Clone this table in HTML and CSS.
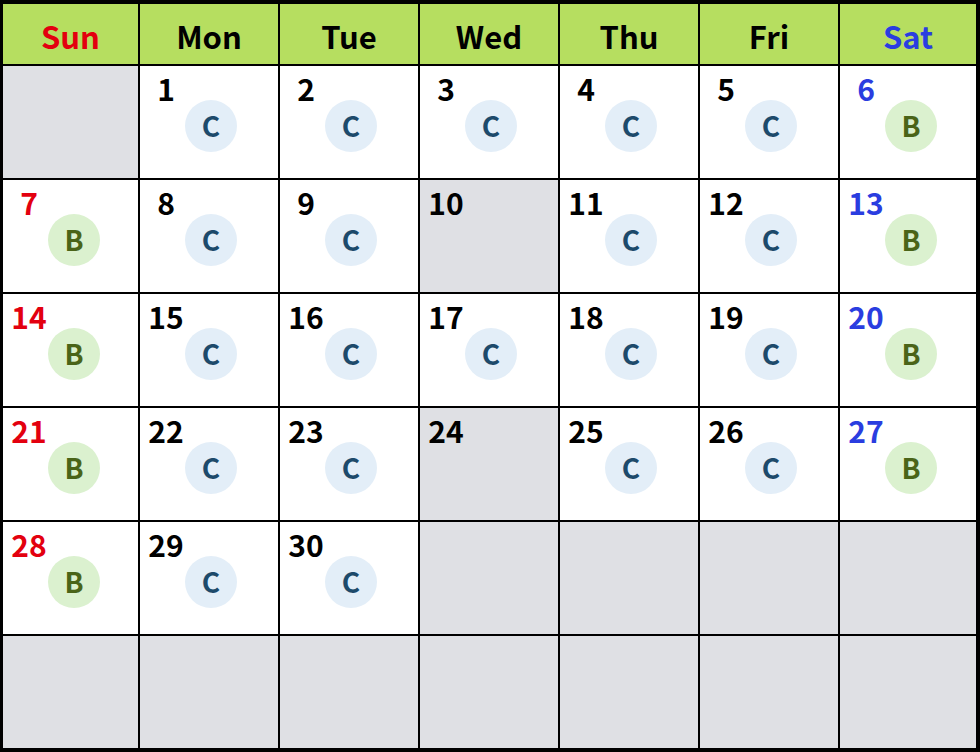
FILE: index.html
```html
<!DOCTYPE html>
<html lang="ja">
<head>
<meta charset="utf-8">
<title>Calendar</title>
<link rel="stylesheet" href="styles.css">
</head>
<body>
<div class="cal">
  <div class="hd sun">Sun</div>
  <div class="hd">Mon</div>
  <div class="hd">Tue</div>
  <div class="hd">Wed</div>
  <div class="hd">Thu</div>
  <div class="hd">Fri</div>
  <div class="hd sat">Sat</div>

  <div class="day off"></div>
  <div class="day"><div class="num">1</div><div class="bd c">C</div></div>
  <div class="day"><div class="num">2</div><div class="bd c">C</div></div>
  <div class="day"><div class="num">3</div><div class="bd c">C</div></div>
  <div class="day"><div class="num">4</div><div class="bd c">C</div></div>
  <div class="day"><div class="num">5</div><div class="bd c">C</div></div>
  <div class="day"><div class="num sat">6</div><div class="bd b">B</div></div>

  <div class="day"><div class="num sun">7</div><div class="bd b">B</div></div>
  <div class="day"><div class="num">8</div><div class="bd c">C</div></div>
  <div class="day"><div class="num">9</div><div class="bd c">C</div></div>
  <div class="day off"><div class="num">10</div></div>
  <div class="day"><div class="num">11</div><div class="bd c">C</div></div>
  <div class="day"><div class="num">12</div><div class="bd c">C</div></div>
  <div class="day"><div class="num sat">13</div><div class="bd b">B</div></div>

  <div class="day"><div class="num sun">14</div><div class="bd b">B</div></div>
  <div class="day"><div class="num">15</div><div class="bd c">C</div></div>
  <div class="day"><div class="num">16</div><div class="bd c">C</div></div>
  <div class="day"><div class="num">17</div><div class="bd c">C</div></div>
  <div class="day"><div class="num">18</div><div class="bd c">C</div></div>
  <div class="day"><div class="num">19</div><div class="bd c">C</div></div>
  <div class="day"><div class="num sat">20</div><div class="bd b">B</div></div>

  <div class="day"><div class="num sun">21</div><div class="bd b">B</div></div>
  <div class="day"><div class="num">22</div><div class="bd c">C</div></div>
  <div class="day"><div class="num">23</div><div class="bd c">C</div></div>
  <div class="day off"><div class="num">24</div></div>
  <div class="day"><div class="num">25</div><div class="bd c">C</div></div>
  <div class="day"><div class="num">26</div><div class="bd c">C</div></div>
  <div class="day"><div class="num sat">27</div><div class="bd b">B</div></div>

  <div class="day"><div class="num sun">28</div><div class="bd b">B</div></div>
  <div class="day"><div class="num">29</div><div class="bd c">C</div></div>
  <div class="day"><div class="num">30</div><div class="bd c">C</div></div>
  <div class="day off"></div>
  <div class="day off"></div>
  <div class="day off"></div>
  <div class="day off"></div>

  <div class="day off"></div>
  <div class="day off"></div>
  <div class="day off"></div>
  <div class="day off"></div>
  <div class="day off"></div>
  <div class="day off"></div>
  <div class="day off"></div>
</div>
</body>
</html>
```

FILE: styles.css
```css
html, body {
  margin: 0;
  padding: 0;
  background: #000;
}

.cal {
  width: 980px;
  height: 752px;
  box-sizing: border-box;
  display: grid;
  grid-template-columns: 135px repeat(5, 138px) 136px;
  grid-template-rows: 60px repeat(6, 112px);
  gap: 2px;
  padding: 4px 4px 4px 3px;
  background: #000;
  font-family: "Noto Sans CJK JP", "Noto Sans", sans-serif;
  font-weight: 700;
  color: #000;
}

.hd {
  background: #b6de60;
  display: flex;
  align-items: center;
  justify-content: center;
  font-size: 31px;
  line-height: 31px;
  padding-top: 3px;
  box-sizing: border-box;
}

.day {
  background: #fff;
  padding-top: 10px;
  box-sizing: border-box;
}

.day.off {
  background: #dfe0e4;
}

.num {
  width: 40px;
  margin-left: 6px;
  text-align: center;
  font-size: 30px;
  line-height: 24px;
  height: 24px;
}

.sun { color: #e3000f; }
.sat { color: #2a3de0; }

.bd {
  width: 52px;
  height: 52px;
  border-radius: 50%;
  margin-left: 45px;
  display: flex;
  align-items: center;
  justify-content: center;
  font-size: 28px;
  line-height: 28px;
  padding-bottom: 3px;
  box-sizing: border-box;
}

.bd.c {
  background: #e3eef8;
  color: #1d4a6b;
}

.bd.b {
  background: #dbf1cf;
  color: #4a6418;
}
```
